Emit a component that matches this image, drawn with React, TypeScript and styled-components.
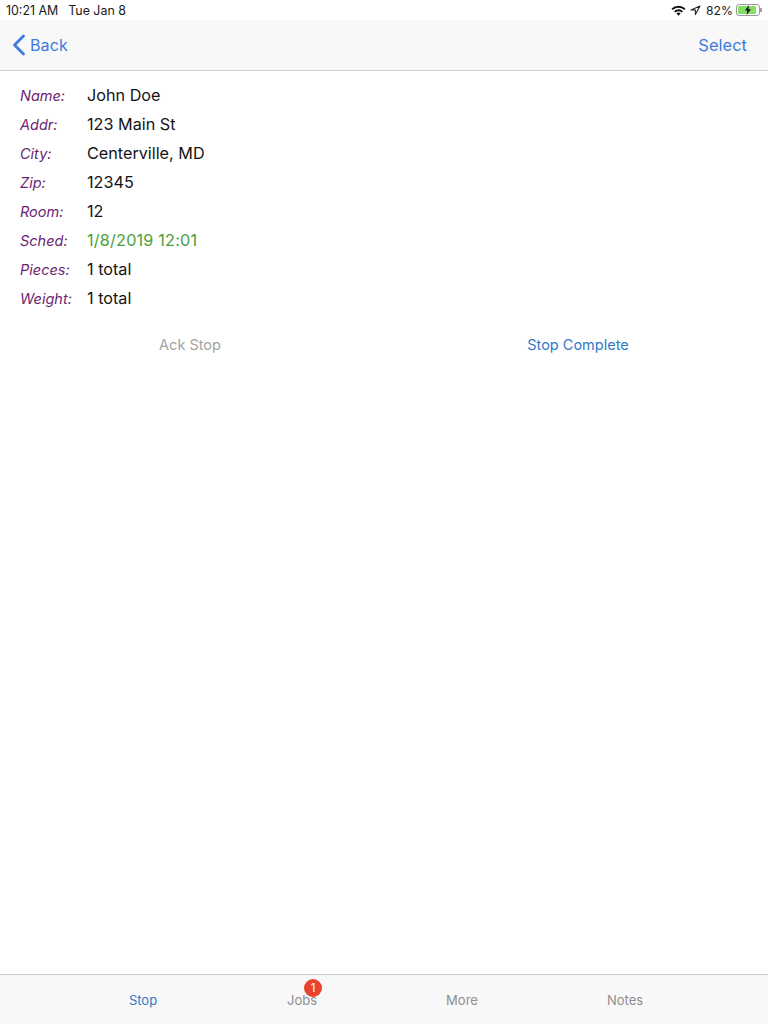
import React from 'react';
import styled, { createGlobalStyle } from 'styled-components';

type Stop = { label: string; value: string; late?: boolean };

const rows: Stop[] = [
  { label: 'Name:', value: 'John Doe' },
  { label: 'Addr:', value: '123 Main St' },
  { label: 'City:', value: 'Centerville, MD' },
  { label: 'Zip:', value: '12345' },
  { label: 'Room:', value: '12' },
  { label: 'Sched:', value: '1/8/2019 12:01', late: true },
  { label: 'Pieces:', value: '1 total' },
  { label: 'Weight:', value: '1 total' },
];

const tabs = ['Stop', 'Jobs', 'More', 'Notes'];

const GlobalStyle = createGlobalStyle`
  html, body {
    margin: 0;
    padding: 0;
    background: #fff;
    font-family: Inter, "Liberation Sans", sans-serif;
  }
`;

const App = () => (
  <Page>
    <GlobalStyle />
    <StatusBar>
      <StatusTime>10:21 AM</StatusTime>
      <StatusTime>Tue Jan 8</StatusTime>
      <StatusRight>
        <svg width="15" height="11" viewBox="0 0 15 11">
          <path d="M0.5 3.6a10 10 0 0 1 14 0l-1.3 1.4a8.1 8.1 0 0 0-11.4 0z" fill="#111" />
          <path d="M3 6.2a6.4 6.4 0 0 1 9 0l-1.3 1.3a4.6 4.6 0 0 0-6.4 0z" fill="#111" />
          <path d="M5.4 8.6a3 3 0 0 1 4.2 0l-2.1 2.1z" fill="#111" />
        </svg>
        <svg width="11" height="11" viewBox="0 0 11 11">
          <path d="M10 1 1 5h4.4v4.6z" fill="none" stroke="#222" strokeWidth="1.1" strokeLinejoin="round" />
        </svg>
        <StatusPct>82%</StatusPct>
        <Battery>
          <BatteryFill />
          <svg width="8" height="10" viewBox="0 0 8 10">
            <path d="M5 0 1 5.6h2.4L2.6 10 7 4.2H4.4z" fill="#111" />
          </svg>
        </Battery>
        <BatteryCap />
      </StatusRight>
    </StatusBar>
    <NavBar>
      <BackLink>
        <svg width="14" height="22" viewBox="0 0 14 22">
          <path d="M11.5 2 2.5 11l9 9" fill="none" stroke="#3f7bdc" strokeWidth="2.8" strokeLinecap="round" strokeLinejoin="round" />
        </svg>
        Back
      </BackLink>
      <NavAction>Select</NavAction>
    </NavBar>
    <Details>
      {rows.map((r) => (
        <Row key={r.label}>
          <Label>{r.label}</Label>
          <Value $late={r.late}>{r.value}</Value>
        </Row>
      ))}
    </Details>
    <Actions>
      <ActionButton $disabled>Ack Stop</ActionButton>
      <ActionButton>Stop Complete</ActionButton>
    </Actions>
    <Spacer />
    <TabBar>
      {tabs.map((t, i) => (
        <Tab key={t} $active={i === 0}>
          {t}
          {t === 'Jobs' && <Badge>1</Badge>}
        </Tab>
      ))}
    </TabBar>
  </Page>
);

const Page = styled.div`
  width: 768px;
  height: 1024px;
  display: flex;
  flex-direction: column;
  overflow: hidden;
  background: #fff;
`;
const StatusBar = styled.div`
  height: 20px;
  display: flex;
  align-items: center;
  gap: 10px;
  padding: 0 6px 0 6px;
  background: #fff;
`;
const StatusTime = styled.span`
  font-size: 12.4px;
  color: #1a1a1a;
`;
const StatusRight = styled.div`
  margin-left: auto;
  display: flex;
  align-items: center;
  gap: 4px;
`;
const StatusPct = styled.span`
  font-size: 12.2px;
  color: #1a1a1a;
  margin: 0 -1px 0 1px;
`;
const Battery = styled.div`
  position: relative;
  width: 24px;
  height: 12px;
  border: 1px solid #9a9a9a;
  border-radius: 3px;
  box-sizing: border-box;
  display: flex;
  align-items: center;
  justify-content: center;
  svg {
    position: relative;
  }
`;
const BatteryFill = styled.div`
  position: absolute;
  left: 1px;
  top: 1px;
  bottom: 1px;
  width: 80%;
  background: #86dc66;
  border-radius: 1px;
`;
const BatteryCap = styled.div`
  width: 2px;
  height: 4px;
  margin-left: -4px;
  background: #9a9a9a;
  border-radius: 0 1px 1px 0;
`;
const NavBar = styled.div`
  height: 50px;
  display: flex;
  align-items: center;
  justify-content: space-between;
  padding: 0 21px 0 12px;
  background: #f8f8f8;
  border-bottom: 1px solid #cfcfcf;
`;
const BackLink = styled.div`
  display: flex;
  align-items: center;
  gap: 4px;
  font-size: 16.2px;
  color: #3f7bdc;
`;
const NavAction = styled.div`
  font-size: 16.5px;
  color: #3f7bdc;
`;
const Details = styled.div`
  display: flex;
  flex-direction: column;
  padding: 9px 0 0 20px;
`;
const Row = styled.div`
  height: 29px;
  display: flex;
  align-items: center;
`;
const Label = styled.div`
  width: 67px;
  padding-top: 2px;
  font-size: 14.5px;
  font-style: italic;
  color: #6d1f73;
`;
const Value = styled.div<{ $late?: boolean }>`
  font-size: 16.2px;
  letter-spacing: ${(p) => (p.$late ? '0.2px' : '0')};
  color: ${(p) => (p.$late ? '#4ba03a' : '#141414')};
`;
const Actions = styled.div`
  display: grid;
  grid-template-columns: 380px 388px;
  margin-top: 23px;
`;
const ActionButton = styled.div<{ $disabled?: boolean }>`
  text-align: center;
  font-size: 14.5px;
  line-height: 20px;
  padding-left: ${(p) => (p.$disabled ? 0 : '8px')};
  color: ${(p) => (p.$disabled ? '#a3a3a3' : '#2f78c4')};
`;
const Spacer = styled.div`
  flex: 1;
`;
const TabBar = styled.div`
  height: 49px;
  display: grid;
  grid-template-columns: 143px 159px 160px 163px;
  padding-left: 0;
  background: #f8f8f8;
  border-top: 1px solid #cfcfcf;
`;
const Tab = styled.div<{ $active?: boolean }>`
  position: relative;
  justify-self: end;
  transform: translateX(50%);
  margin-top: 17px;
  font-size: 13px;
  line-height: 16px;
  height: 16px;
  color: ${(p) => (p.$active ? '#2f78c4' : '#8f8f8f')};
`;
const Badge = styled.div`
  position: absolute;
  top: -13px;
  right: -5px;
  width: 18px;
  height: 18px;
  border-radius: 50%;
  background: #e8432f;
  color: #fff;
  font-size: 11.5px;
  line-height: 18px;
  text-align: center;
`;

export default App;
